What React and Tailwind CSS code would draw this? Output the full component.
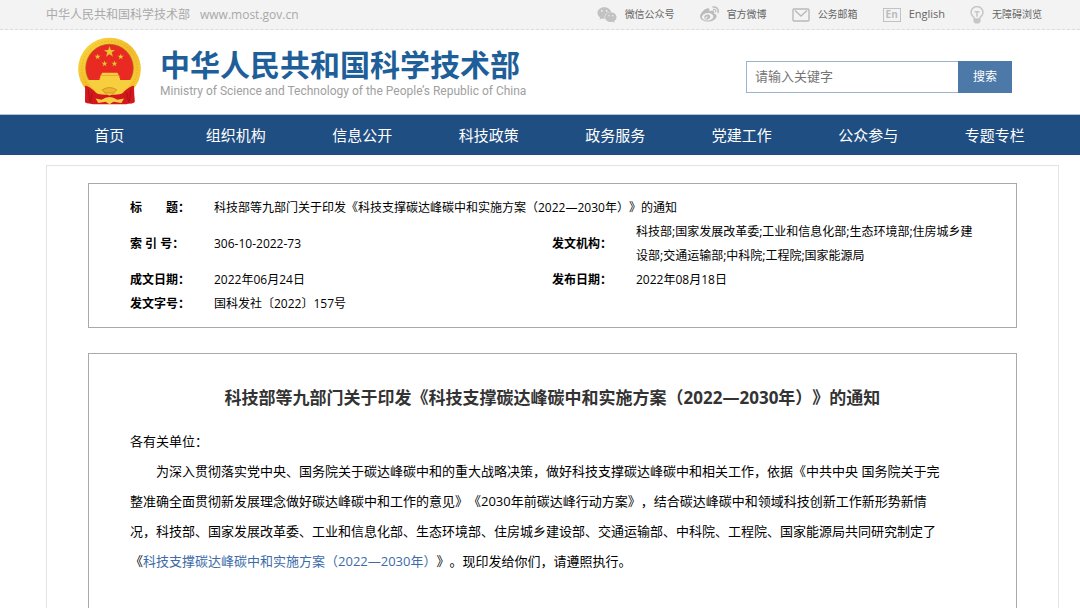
import { FaWeibo, FaWeixin } from "react-icons/fa";

const NAV = ["首页", "组织机构", "信息公开", "科技政策", "政务服务", "党建工作", "公众参与", "专题专栏"];

const STAR = "0,-10 2.4,-3.2 9.5,-3.1 3.8,1.2 5.9,8.1 0,4 -5.9,8.1 -3.8,1.2 -9.5,-3.1 -2.4,-3.2";

function Emblem() {
  return (
    <svg viewBox="22 20 192 206" className="h-[68px] w-[65px] shrink-0" role="img" aria-label="国徽">
      <defs>
        <linearGradient id="gold" x1="0" y1="0" x2="1" y2="1">
          <stop offset="0" stopColor="#fbd93f" />
          <stop offset="0.5" stopColor="#f2bb2c" />
          <stop offset="1" stopColor="#f8cf38" />
        </linearGradient>
      </defs>
      <path d="M48 166c14 14 38 24 70 24s58-10 72-24l4 52c-8 6-18 2-24 6H68c-8-4-16 0-24-6z" fill="#d3181d" />
      <circle cx="118" cy="117" r="95" fill="url(#gold)" />
      <circle cx="118" cy="117" r="84" fill="none" stroke="#dc9d22" strokeWidth="4" strokeDasharray="4 6" opacity="0.4" />
      <circle cx="118" cy="114" r="72" fill="#e92a22" stroke="#a8641c" strokeWidth="2" />
      <g fill="#f2c531" stroke="#b5651d" strokeWidth="0.5">
        <polygon points={STAR} transform="translate(118 65) scale(1.8)" />
        <polygon points={STAR} transform="translate(82 80) scale(.95)" />
        <polygon points={STAR} transform="translate(152 80) scale(.95)" />
        <polygon points={STAR} transform="translate(103 101) scale(.95)" />
        <polygon points={STAR} transform="translate(133 101) scale(.95)" />
      </g>
      <path d="M96 128h46l4 8h-54zM90 137h58v8H90zM88 144h62v8H88zM50 150h136c-8 20-22 32-38 38H88c-16-6-30-18-38-38z" fill="#f7ce3d" />
      <path d="M44 168c14 2 24 12 34 22 8 6 24 6 40 4 16 2 32 2 40-4 10-10 20-20 34-22l2 48c-10 8-18 2-24 6H68c-8-4-16 0-24-6z" fill="#d3181d" />
      <path d="M72 182c10-10 24-10 32-2l14-8 14 8c8-8 22-8 32 2-8 12-24 12-32 8l-14 8-14-8c-8 4-24 4-32-8z" fill="#f7ce3d" />
      <path d="M96 180q22-14 44 0l-9 10h-26z" fill="#edb52b" stroke="#b5651d" strokeWidth="1.5" />
      <path d="M76 206l18 4q24-16 48 0l20-4-8 14-24-4-12 8-12-8-22 4z" fill="#f7ce3d" />
      <path d="M54 180l4 36M66 188l-6 30M182 180l-4 36M170 188l6 30" stroke="#a81015" strokeWidth="2.5" fill="none" />
    </svg>
  );
}

function MailIcon() {
  return (
    <svg viewBox="0 0 18 14" className="h-[14px] w-[18px]" fill="none" stroke="#b9b9b9" strokeWidth="1.4" aria-hidden="true">
      <rect x="1" y="1" width="16" height="12" rx="1" />
      <path d="M3 2.5l6 5.5 6-5.5" />
    </svg>
  );
}

function BulbIcon() {
  return (
    <svg viewBox="0 0 14 18" className="h-[18px] w-[14px]" fill="none" stroke="#c6c6c6" strokeWidth="1.5" aria-hidden="true">
      <path d="M4.5 13c0-2-3.5-3.2-3.5-6.5a6 6 0 0 1 12 0c0 3.3-3.5 4.500-3.500 6.500z" />
      <path d="M4.5 5.700h5M7 5.700v5" />
      <path d="M3.5 13h7v2.500l-1.500 2h-4l-1.500-2z" fill="#c6c6c6" stroke="none" />
    </svg>
  );
}

function TopLink({ icon, children }) {
  return (
    <a href="#" className="flex items-center gap-2">
      {icon}
      <span>{children}</span>
    </a>
  );
}

function Label({ children }) {
  return (
    <th scope="row" className="p-0 text-left align-middle font-bold whitespace-pre">
      {children}
    </th>
  );
}

export default function App() {
  return (
    <div className="min-h-screen overflow-x-hidden bg-white font-['Open_Sans','Noto_Sans_CJK_SC',sans-serif] text-black [text-spacing-trim:space-all]">
      <div className="flex h-[30px] items-center justify-between border-b border-dashed border-[#dcdcdc] bg-[#f3f3f3] pr-[38px] pl-[46px]">
        <div className="flex gap-[10px] text-xs text-[#a9a9a9]">
          <span>中华人民共和国科学技术部</span>
          <span>www.most.gov.cn</span>
        </div>
        <div className="flex items-center gap-[25px] text-[10px] text-[#666]">
          <TopLink icon={<FaWeixin className="size-[20px] text-[#c2c2c2]" />}>微信公众号</TopLink>
          <TopLink icon={<FaWeibo className="size-[19px] text-[#bcbcbc]" />}>官方微博</TopLink>
          <TopLink icon={<MailIcon />}>公务邮箱</TopLink>
          <TopLink
            icon={
              <span className="flex h-[14px] w-[18px] items-center justify-center border border-[#c2c2c2] text-[10px] font-bold text-[#bcbcbc]">
                En
              </span>
            }
          >
            <span className="text-[11px]">English</span>
          </TopLink>
          <TopLink icon={<BulbIcon />}>无障碍浏览</TopLink>
        </div>
      </div>

      <header className="flex h-[84px] items-center justify-between pr-[68px] pb-[2px] pl-[77px]">
        <a href="#" className="flex items-center gap-[18px]">
          <Emblem />
          <div className="mt-1">
            <h1 className="text-[30px] leading-9 font-bold text-[#1f5f99]">中华人民共和国科学技术部</h1>
            <p className="font-[Roboto,sans-serif] text-xs leading-4 text-[#a0a0a0]">
              Ministry of Science and Technology of the People’s Republic of China
            </p>
          </div>
        </a>
        <form className="mt-3 flex h-8" onSubmit={(e) => e.preventDefault()}>
          <input
            type="text"
            aria-label="请输入关键字"
            placeholder="请输入关键字"
            className="w-[212px] border border-r-0 border-[#9bb2d1] bg-white px-2 text-[13px] outline-none placeholder:text-[#757575]"
          />
          <button type="submit" className="w-[54px] bg-[#4d79a9] text-xs text-white">
            搜索
          </button>
        </form>
      </header>

      <nav className="border-t border-[#b5c4d6] bg-[#1f4e82] pr-[22px] pl-[46px]">
        <ul className="grid h-10 grid-cols-8 items-center text-center text-[15px] text-white">
          {NAV.map((item) => (
            <li key={item}>
              <a href="#">{item}</a>
            </li>
          ))}
        </ul>
      </nav>

      <main className="mt-[10px] mr-[21px] ml-[46px] border border-b-0 border-[#e3e3e3] px-[41px] pt-[17px]">
        <section className="border border-[#a9a9a9] px-[41px] pt-3 pb-[11px]">
          <table className="w-full table-fixed border-collapse text-xs leading-6">
            <colgroup>
              <col className="w-[84px]" />
              <col className="w-[338px]" />
              <col className="w-[84px]" />
              <col />
            </colgroup>
            <tbody>
              <tr>
                <Label>{"标\u3000\u3000题："}</Label>
                <td colSpan={3} className="p-0">科技部等九部门关于印发《科技支撑碳达峰碳中和实施方案（2022—2030年）》的通知</td>
              </tr>
              <tr>
                <Label>索 引 号：</Label>
                <td className="p-0">306-10-2022-73</td>
                <Label>发文机构：</Label>
                <td className="p-0">科技部;国家发展改革委;工业和信息化部;生态环境部;住房城乡建设部;交通运输部;中科院;工程院;国家能源局</td>
              </tr>
              <tr>
                <Label>成文日期：</Label>
                <td className="p-0">2022年06月24日</td>
                <Label>发布日期：</Label>
                <td className="p-0">2022年08月18日</td>
              </tr>
              <tr>
                <Label>发文字号：</Label>
                <td colSpan={3} className="p-0">国科发社〔2022〕157号</td>
              </tr>
            </tbody>
          </table>
        </section>

        <article className="mt-[25px] min-h-[256px] border border-b-0 border-[#a9a9a9] px-[41px] pt-[30px]">
          <h2 className="text-center text-[17px] leading-7 font-bold text-[#333]">
            科技部等九部门关于印发《科技支撑碳达峰碳中和实施方案（2022—2030年）》的通知
          </h2>
          <div className="mt-[14px] text-[13px] leading-[30px] whitespace-nowrap">
            <p>各有关单位：</p>
            <p className="indent-[2em]">
              为深入贯彻落实党中央、国务院关于碳达峰碳中和的重大战略决策，做好科技支撑碳达峰碳中和相关工作，依据《中共中央 国务院关于完
              <br />
              整准确全面贯彻新发展理念做好碳达峰碳中和工作的意见》《2030年前碳达峰行动方案》，结合碳达峰碳中和领域科技创新工作新形势新情
              <br />
              况，科技部、国家发展改革委、工业和信息化部、生态环境部、住房城乡建设部、交通运输部、中科院、工程院、国家能源局共同研究制定了
              <br />
              《<a href="#" className="text-[#3d6ba8]">科技支撑碳达峰碳中和实施方案（2022—2030年）</a>》。现印发给你们，请遵照执行。
            </p>
          </div>
        </article>
      </main>
    </div>
  );
}
